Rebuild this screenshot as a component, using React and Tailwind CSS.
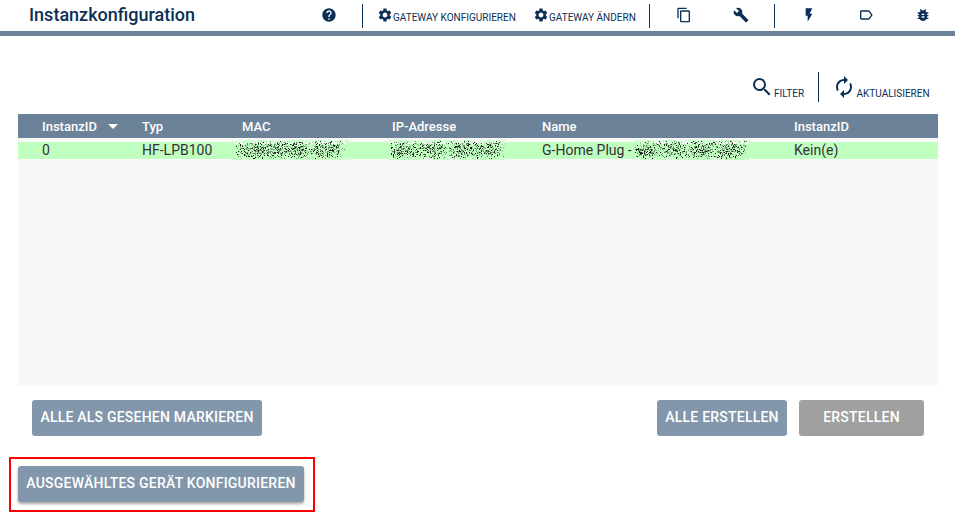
import React from 'react';
import {
  MdHelp, MdSettings, MdContentCopy, MdBuild, MdFlashOn,
  MdLabelOutline, MdBugReport, MdSearch, MdAutorenew,
} from 'react-icons/md';

// Deterministic speckle used to mask the private values of a row.
function speckle(width, seed, words) {
  let s = seed;
  const rnd = () => {
    s = (s * 1664525 + 1013904223) % 4294967296;
    return s / 4294967296;
  };
  const dark = [];
  const mid = [];
  const pale = [];
  const light = [];
  for (let y = 0; y < 22; y++) {
    for (let x = 0; x < width; x++) {
      const r = rnd();
      // Density falls off away from the centre of every word.
      let d = 0;
      words.forEach(([a, b]) => {
        const t = Math.abs(x - (a + b) / 2) / ((b - a) / 2);
        d = Math.max(d, 1 - t * t * t);
      });
      const v = Math.max(0, 1 - Math.pow(Math.abs(y - 10.5) / 9.5, 2));
      const p = d * v;
      const cell = `M${x} ${y}h1v1h-1z`;
      if (r < p * 0.17) dark.push(cell);
      else if (r < p * 0.4) mid.push(cell);
      else if (r < p * 0.6) pale.push(cell);
      else if (y < 5 && r > 0.6) light.push(cell);
      else if (y >= 19 && r > 0.8) light.push(cell);
    }
  }
  return { dark: dark.join(''), mid: mid.join(''), pale: pale.join(''), light: light.join('') };
}

function Mask({ width, seed, words }) {
  const p = speckle(width, seed, words);
  return (
    <svg width={width} height="22" viewBox={`0 0 ${width} 22`} shapeRendering="crispEdges" className="block shrink-0">
      <path d={`M0 1h${width}v20H0z`} fill="#c1ffc1" />
      <path d={p.light} fill="#f8f8f8" />
      <path d={p.pale} fill="#9fd09f" />
      <path d={p.mid} fill="#668a67" />
      <path d={p.dark} fill="#182018" />
    </svg>
  );
}

const Divider = () => <div className="w-px shrink-0 bg-[#0b2f55]" />;

export default function App() {
  return (
    <div className="h-[515px] w-[955px] overflow-hidden bg-white font-['Roboto',sans-serif] text-[#0b2f55]">
      <header className="flex h-9 items-start border-b-[5px] border-[#6b8299]">
        <h1 className="w-[292px] pl-[29px] pt-[2px] text-[18px] leading-[26px] font-medium">Instanzkonfiguration</h1>
        <div className="flex h-[31px] flex-1 items-center">
          <MdHelp size={16} className="-mt-px ml-[29px]" />
          <div className="ml-[25px] h-6 w-px shrink-0 bg-[#0b2f55]" />
          <div className="ml-[14px] flex w-[156px] items-center whitespace-nowrap text-[10px]">
            <MdSettings size={16} className="-mt-0.5 shrink-0" />
            <span className="pt-1">GATEWAY KONFIGURIEREN</span>
          </div>
          <div className="flex w-[116px] items-center whitespace-nowrap text-[10px]">
            <MdSettings size={16} className="-mt-0.5 shrink-0" />
            <span className="pt-1">GATEWAY ÄNDERN</span>
          </div>
          <div className="h-6 w-px shrink-0 bg-[#0b2f55]" />
          <MdContentCopy size={16} className="-mt-px ml-[26px] shrink-0" />
          <MdBuild size={16} className="-mt-px ml-[41px] shrink-0" />
          <div className="ml-[25px] h-6 w-px shrink-0 bg-[#0b2f55]" />
          <MdFlashOn size={16} className="-mt-px ml-[26px] shrink-0" />
          <MdLabelOutline size={16} className="-mt-px ml-[41px] shrink-0" />
          <MdBugReport size={16} className="-mt-px ml-[41px] shrink-0" />
        </div>
      </header>

      <div className="mt-9 flex h-[30px] pl-[750px] text-[10px] whitespace-nowrap">
        <div className="flex w-[68px]">
          <MdSearch size={24} className="mt-[3px] shrink-0" />
          <span className="pt-[14px]">FILTER</span>
        </div>
        <Divider />
        <div className="ml-[13px] flex">
          <MdAutorenew size={24} className="mt-[3px] shrink-0" />
          <span className="pt-[14px] pl-[0.5px]">AKTUALISIEREN</span>
        </div>
      </div>

      <main className="ml-[18px] mt-3 w-[920px]">
        <section className="h-[272px] bg-[#f8f8f8] text-[13px]">
          <div className="grid h-6 grid-cols-[100px_100px_150px_150px_252px_1fr] items-center bg-[#6b8299] pl-6 pt-px font-medium text-white">
            <div className="flex items-center">
              InstanzID
              <svg width="10" height="5" viewBox="0 0 10 5" className="ml-[11px]"><path d="M0 0h10L5 5z" fill="#fff" /></svg>
            </div>
            <div>Typ</div>
            <div>MAC</div>
            <div>IP-Adresse</div>
            <div>Name</div>
            <div>InstanzID</div>
          </div>
          <div className="mt-1 grid h-[17px] grid-cols-[100px_90px_157px_153px_252px_1fr] items-center bg-[#c1ffc1] pl-6 text-[14px] leading-[17px] text-[#333]">
            <div>0</div>
            <div>HF-LPB100</div>
            <div className="-mt-[5px] -mb-1"><Mask width={120} seed={7} words={[[3, 40], [28, 60], [50, 80], [76, 113]]} /></div>
            <div className="-mt-[5px] -mb-1"><Mask width={116} seed={31} words={[[0, 32], [28, 60], [56, 88], [82, 116]]} /></div>
            <div className="flex items-center gap-[3px] whitespace-nowrap">
              <span>G-Home Plug -</span>
              <div className="-mt-[5px] -mb-1"><Mask width={115} seed={83} words={[[-5, 28], [22, 54], [50, 82], [76, 112]]} /></div>
            </div>
            <div>Kein(e)</div>
          </div>
        </section>

        <div className="mt-[14px] flex gap-3 pl-[14px] pr-[14px] text-[14px] font-medium tracking-[0.22px] text-white">
          <button className="h-9 w-[230px] whitespace-nowrap rounded-[3px] bg-[#8297ab] pb-0.5">ALLE ALS GESEHEN MARKIEREN</button>
          <button className="ml-auto h-9 w-[130px] whitespace-nowrap rounded-[3px] bg-[#8297ab] pb-0.5">ALLE ERSTELLEN</button>
          <button className="h-9 w-[125px] whitespace-nowrap rounded-[3px] bg-[#a0a0a0] pb-0.5">ERSTELLEN</button>
        </div>
      </main>

      <div className="ml-[9px] mt-[21px] h-[55px] w-[306px] border-2 border-[#f00] pl-[7px] pt-[7px]">
        <button className="h-9 w-[286px] whitespace-nowrap rounded-[3px] bg-[#8297ab] pb-0.5 text-[14px] font-medium tracking-[0.23px] text-white shadow-[0_2px_3px_rgba(0,0,0,0.35)]">AUSGEWÄHLTES GERÄT KONFIGURIEREN</button>
      </div>
    </div>
  );
}
